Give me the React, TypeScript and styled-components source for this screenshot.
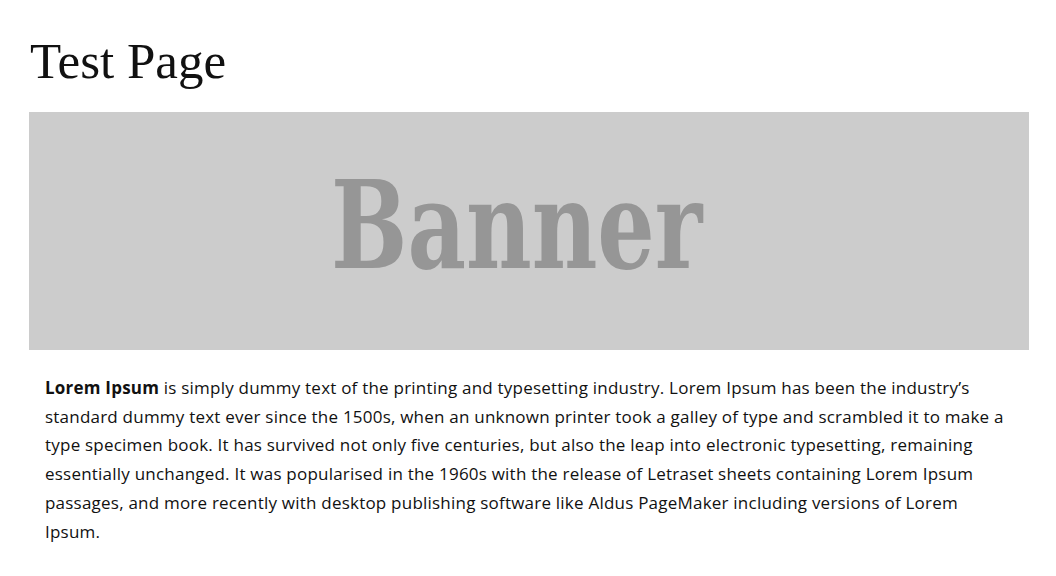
import styled, { createGlobalStyle } from 'styled-components';

const GlobalStyle = createGlobalStyle`
    html, body {
        margin: 0;
        padding: 0;
        background: #fff;
    }
`;

const Page = styled.div`
    width: 1000px;
    padding: 0 29px;
`;

const Title = styled.h1`
    margin: 0;
    padding: 31px 0 20px 1px;
    font-family: "Liberation Serif", serif;
    font-weight: 400;
    font-size: 51px;
    line-height: 61px;
    color: #111;
`;

const Banner = styled.div`
    height: 238px;
    background: #cccccc;
    display: flex;
    align-items: center;
    justify-content: center;
`;

const BannerText = styled.span`
    font-family: "DejaVu Serif", serif;
    font-stretch: condensed;
    font-weight: 700;
    font-size: 121px;
    color: #969696;
    line-height: 1;
    padding-bottom: 12px;
    margin-right: 24px;
    display: inline-block;
    transform: scaleX(0.83);
`;

const Body = styled.p`
    margin: 0;
    padding: 24px 16px;
    font-family: "Open Sans", sans-serif;
    font-size: 17px;
    letter-spacing: 0.22px;
    line-height: 28.7px;
    color: #111;
`;

export default function App() {
    return (
        <>
            <GlobalStyle />
            <Page>
                <Title>Test Page</Title>
                <Banner>
                    <BannerText>Banner</BannerText>
                </Banner>
                <Body>
                    <strong>Lorem Ipsum</strong> is simply dummy text of the printing and typesetting industry. Lorem Ipsum has been the industry’s standard dummy text ever since the 1500s, when an unknown printer took a galley of type and scrambled it to make a type specimen book. It has survived not only five centuries, but also the leap into electronic typesetting, remaining essentially unchanged. It was popularised in the 1960s with the release of Letraset sheets containing Lorem Ipsum passages, and more recently with desktop publishing software like Aldus PageMaker including versions of Lorem Ipsum.
                </Body>
            </Page>
        </>
    );
}
